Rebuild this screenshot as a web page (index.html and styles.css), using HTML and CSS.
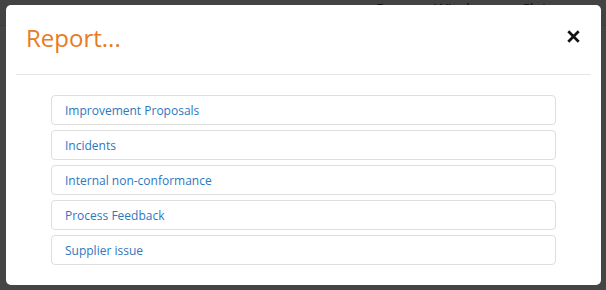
FILE: index.html
```html
<!DOCTYPE html>
<html lang="en">
<head>
    <meta charset="UTF-8">
    <meta name="viewport" content="width=device-width, initial-scale=1.0">
    <title>Report...</title>
    <link rel="stylesheet" href="styles.css">
</head>
<body>
    <div class="page">
        <div class="page-header">
            <span class="page-title">Process Windscreen Claims</span>
        </div>
    </div>

    <div class="backdrop">
        <div class="modal">
            <div class="modal-header">
                <h2 class="modal-title">Report...</h2>
                <button class="close" type="button" aria-label="Close">
                    <svg width="13" height="13" viewBox="0 0 13 13">
                        <path d="M1.3 1.3 L11.7 11.7 M11.7 1.3 L1.3 11.7" stroke="#111" stroke-width="2.7" fill="none"/>
                    </svg>
                </button>
            </div>
            <div class="modal-body">
                <a class="report-item" href="#">Improvement Proposals</a>
                <a class="report-item" href="#">Incidents</a>
                <a class="report-item" href="#">Internal non-conformance</a>
                <a class="report-item" href="#">Process Feedback</a>
                <a class="report-item" href="#">Supplier issue</a>
            </div>
        </div>
    </div>
</body>
</html>
```

FILE: styles.css
```css
html, body {
    margin: 0;
    padding: 0;
}
body {
    font-family: "Open Sans", "Liberation Sans", sans-serif;
    background-color: #fff;
    height: 290px;
    overflow: hidden;
}
.page-header {
    height: 27px;
    border-bottom: 1px solid #e6e6e6;
    background-color: #f7f7f7;
    padding-left: 376px;
}
.page-title {
    display: block;
    font-size: 15px;
    line-height: 20px;
    margin-top: -2px;
    color: #2c3e5c;
}
.backdrop {
    position: fixed;
    top: 0;
    left: 0;
    right: 0;
    bottom: 0;
    background-color: rgba(0, 0, 0, 0.73);
    padding: 5px 0 0 6px;
}
.modal {
    width: 595px;
    height: 280px;
    box-sizing: border-box;
    background-color: #fff;
    border-radius: 5px;
    padding: 0 10px;
}
.modal-header {
    display: flex;
    align-items: flex-start;
    justify-content: space-between;
    padding: 20px 11px 23px 10px;
    border-bottom: 1px solid #e5e5e5;
}
.modal-title {
    margin: 0;
    font-size: 24px;
    font-weight: 400;
    line-height: 26.4px;
    color: #e97b22;
}
.close {
    border: none;
    background: none;
    padding: 0;
    margin-top: 5px;
    width: 13px;
    height: 13px;
    display: block;
    cursor: pointer;
}
.close svg {
    display: block;
}
.modal-body {
    display: flex;
    flex-direction: column;
    gap: 5px;
    padding: 20px 35px;
}
.report-item {
    display: block;
    height: 30px;
    box-sizing: border-box;
    border: 1px solid #dedede;
    border-radius: 4px;
    padding: 1px 13px 0;
    font-size: 12px;
    line-height: 27px;
    color: #2d77c0;
    text-decoration: none;
}
.report-item:hover {
    background-color: #f5f5f5;
}
```
